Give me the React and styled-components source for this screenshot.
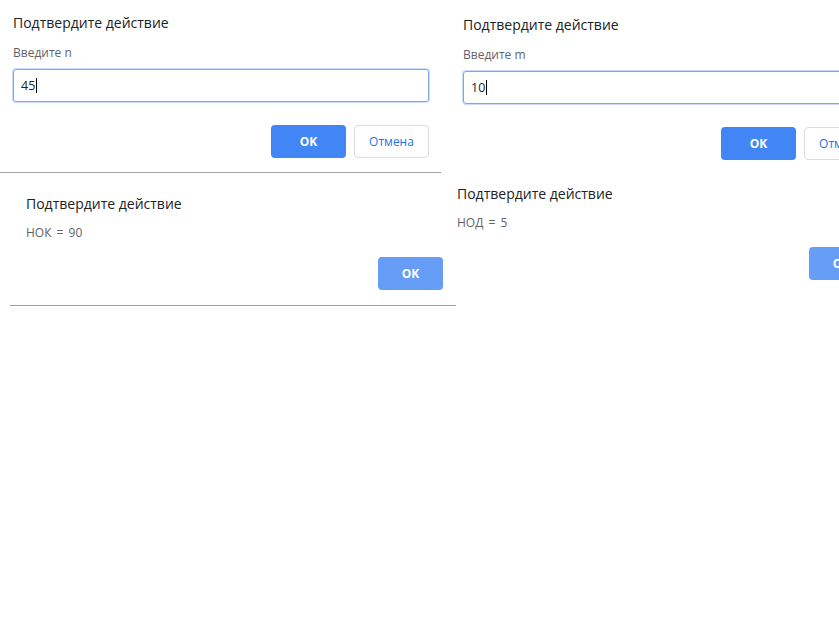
import React from 'react';
import styled, { createGlobalStyle } from 'styled-components';

const GlobalStyle = createGlobalStyle`
    html, body {
        margin: 0;
        padding: 0;
        background: #ffffff;
        overflow: hidden;
    }
    body {
        font-family: "Open Sans", "Noto Sans", "Liberation Sans", sans-serif;
    }
`;

// the screenshots are pasted side by side like windows on a desktop
const Desk = styled.div`
    position: relative;
    width: 839px;
    height: 619px;
    background: #ffffff;
`;

const Dialog = styled.div`
    position: absolute;
    left: ${(p) => p.$x}px;
    top: ${(p) => p.$y}px;
    width: ${(p) => p.$w}px;
    box-sizing: border-box;
    padding: ${(p) => (p.$alert ? '20px 13px 15px 16px' : '13px 15px 14px 13px')};
    background: #ffffff;
    border-bottom: ${(p) => (p.$divider ? '1px solid #a0a0a0' : 'none')};
    display: flex;
    flex-direction: column;
`;

const Title = styled.div`
    font-size: 14px;
    line-height: 20px;
    color: #202124;
`;

const Message = styled.div`
    margin-top: ${(p) => (p.$alert ? 11 : 12)}px;
    font-size: 12px;
    line-height: 16px;
    color: #5f6368;
    word-spacing: ${(p) => (p.$alert ? 2 : 0)}px;
`;

const Field = styled.div`
    margin-top: 8px;
    height: 33px;
    box-sizing: border-box;
    border: 1px solid #7da5ec;
    box-shadow: 0 0 0 1px rgba(138, 180, 248, 0.45);
    border-radius: 3px;
    padding: 0 7px;
    display: flex;
    align-items: center;
    font-size: 12.5px;
    color: #202124;
`;

const Caret = styled.span`
    display: inline-block;
    width: 1px;
    height: 15px;
    margin-left: 1px;
    background: #000000;
`;

const Actions = styled.div`
    margin-top: ${(p) => p.$gap}px;
    display: flex;
    justify-content: flex-end;
    gap: 8px;
`;

const Button = styled.button`
    width: ${(p) => p.$w || 75}px;
    height: 33px;
    box-sizing: border-box;
    border-radius: 4px;
    font-family: inherit;
    font-size: 12px;
    cursor: pointer;
    padding: 0;
    ${(p) =>
        p.$kind === 'cancel'
            ? `
        background: #ffffff;
        border: 1px solid #dadce0;
        color: #1a73e8;
    `
            : `
        background: ${p.$kind === 'muted' ? '#669df6' : '#4285f4'};
        border: none;
        color: #ffffff;
        font-weight: 700;
    `}
`;

const Prompt = ({ x, y, label, value }) => (
    <Dialog $x={x} $y={y} $w={444} $divider>
        <Title>Подтвердите действие</Title>
        <Message>{label}</Message>
        <Field>
            {value}
            <Caret />
        </Field>
        <Actions $gap={23}>
            <Button $kind="primary">OK</Button>
            <Button $kind="cancel">Отмена</Button>
        </Actions>
    </Dialog>
);

const Alert = ({ x, y, text, divider }) => (
    <Dialog $x={x} $y={y} $w={446} $alert $divider={divider}>
        <Title>Подтвердите действие</Title>
        <Message $alert>{text}</Message>
        <Actions $gap={16}>
            <Button $kind="muted" $w={65}>
                OK
            </Button>
        </Actions>
    </Dialog>
);

export default function App() {
    return (
        <>
            <GlobalStyle />
            <Desk>
                <Prompt x={0} y={0} label="Введите n" value="45" />
                <Prompt x={450} y={2} label="Введите m" value="10" />
                <Alert x={441} y={164} text="НОД = 5" />
                <Alert x={10} y={174} text="НОК = 90" divider />
            </Desk>
        </>
    );
}
